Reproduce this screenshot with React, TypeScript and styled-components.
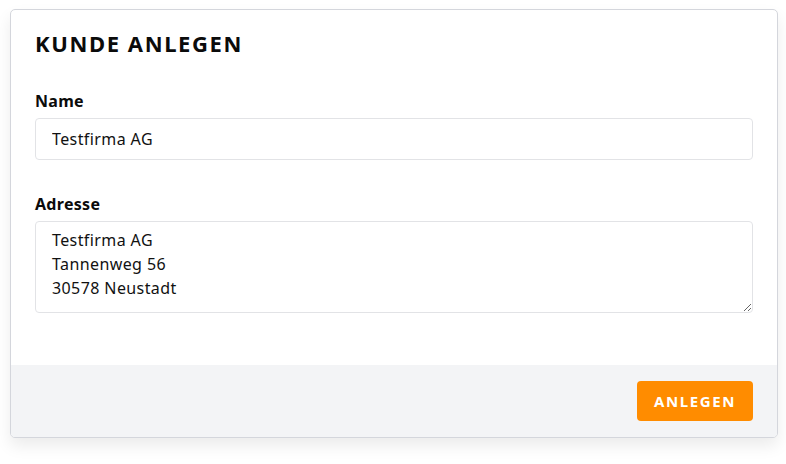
import React from "react";
import styled, { createGlobalStyle } from "styled-components";

const GlobalStyle = createGlobalStyle`
  html, body {
    margin: 0;
    padding: 0;
    background: #ffffff;
    font-family: "Noto Sans", "Open Sans", sans-serif;
    color: #111;
  }
  * { box-sizing: border-box; }
`;

const Page = styled.div`
  padding: 9px 8px 26px 10px;
`;

const Card = styled.div`
  border: 1px solid #d4d6dc;
  border-radius: 5px;
  background: #fff;
  overflow: hidden;
  box-shadow: 0 8px 16px rgba(0, 0, 0, 0.08);
`;

const Body = styled.div`
  padding: 19px 24px 52px 24px;
  display: flex;
  flex-direction: column;
`;

const Title = styled.h1`
  margin: 0 0 34px 0;
  font-size: 22px;
  font-weight: 700;
  letter-spacing: 1.6px;
  line-height: 28px;
  color: #0b0b0b;
`;

const Field = styled.div`
  display: flex;
  flex-direction: column;
  margin-bottom: 34px;

  &:last-child {
    margin-bottom: 0;
  }
`;

const Label = styled.label`
  font-size: 16px;
  font-weight: 700;
  letter-spacing: 0.3px;
  line-height: 20px;
  margin-bottom: 7px;
  color: #0b0b0b;
`;

const Input = styled.input`
  height: 42px;
  border: 1px solid #e2e3e6;
  border-radius: 4px;
  padding: 0 16px;
  font-family: inherit;
  font-size: 16px;
  letter-spacing: 0.4px;
  color: #111;
  outline: none;
`;

const TextArea = styled.textarea`
  height: 92px;
  border: 1px solid #e2e3e6;
  border-radius: 4px;
  padding: 6px 16px;
  font-family: inherit;
  font-size: 16px;
  letter-spacing: 0.4px;
  line-height: 24px;
  color: #111;
  outline: none;
  resize: vertical;
`;

const Footer = styled.div`
  background: #f3f4f6;
  padding: 16px 24px 16px 24px;
  display: flex;
  justify-content: flex-end;
`;

const Button = styled.button`
  background: #ff8c00;
  color: #fff;
  border: none;
  border-radius: 4px;
  height: 40px;
  padding: 0 17px;
  font-family: inherit;
  font-size: 15px;
  font-weight: 700;
  letter-spacing: 1.6px;
  cursor: pointer;
`;

export default function App() {
  return (
    <>
      <GlobalStyle />
      <Page>
        <Card>
          <Body>
            <Title>KUNDE ANLEGEN</Title>
            <Field>
              <Label>Name</Label>
              <Input defaultValue="Testfirma AG" />
            </Field>
            <Field>
              <Label>Adresse</Label>
              <TextArea defaultValue={"Testfirma AG\nTannenweg 56\n30578 Neustadt"} />
            </Field>
          </Body>
          <Footer>
            <Button>ANLEGEN</Button>
          </Footer>
        </Card>
      </Page>
    </>
  );
}
